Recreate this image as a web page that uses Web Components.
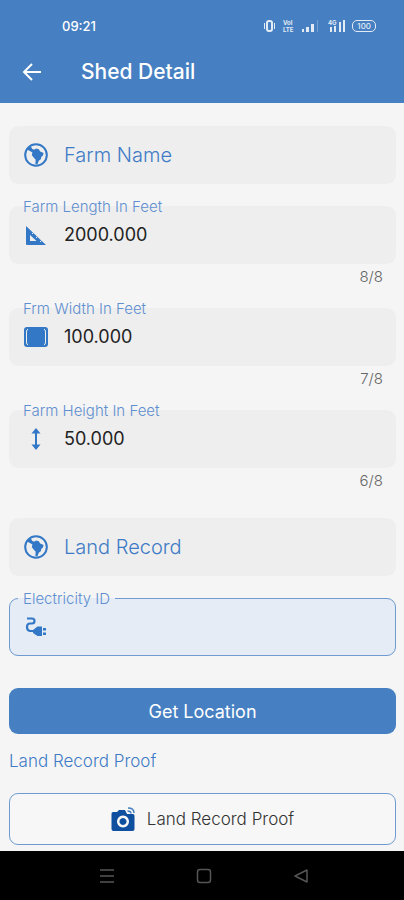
<!DOCTYPE html>
<html lang="en">
<head>
<meta charset="utf-8">
<meta name="viewport" content="width=device-width, initial-scale=1">
<title>Shed Detail</title>
<style>
    body {
        margin: 0;
        background: #f5f5f5;
        font-family: Inter, "Open Sans", sans-serif;
        color: #222;
    }
</style>
</head>
<body>
<shed-page></shed-page>

<script>
const ICONS = {
    globe: `<circle cx="12" cy="12" r="10.8" fill="none" stroke="currentColor" stroke-width="2"/>
        <path fill="currentColor" d="M3 6.5 6.4 3 8.6 6.2 10.6 6.6 12.2 5.6 14.8 6.2 16.2 8.4 19.6 10 18.8 12.8 17.4 13.8 16.8 16.2 14.8 17.8 13.4 21.4 11.4 21 11.6 16.4 9.8 14.8 7.8 12 8.4 9.4 6.8 8.4Z"/>`,
    ruler: `<path fill="currentColor" fill-rule="evenodd" d="M2 3 22 22H3Q2 22 2 21ZM6 12V18H12.5Z"/>
        <path stroke="#eee" d="M8 11 9.5 9.5M12 15l1.5-1.5M16 19l1.5-1.5"/>`,
    width: `<rect x="0" y="2" width="24" height="20" rx="3" fill="currentColor"/>
        <path stroke="#eee" fill="none" d="M4 4Q2.5 4.5 2.5 7V17Q2.5 19.5 4 20M20 4Q21.5 4.500 21.5 7V17Q21.5 19.5 20 20"/>`,
    height: `<path fill="none" stroke="currentColor" stroke-width="2" d="M12 4V20"/>
        <path fill="currentColor" d="M12 1 16.5 6.5H7.5ZM12 23 16.5 17.5H7.5Z"/>`,
    plug: `<path fill="none" stroke="currentColor" stroke-width="2.2" d="M3 3.5H8Q10.500 3.5 10.500 6T8 8.500H6Q3 8.500 3 12T6 16H10"/>
        <path fill="currentColor" d="M9 15 13.5 11.500H18V21H13.5L9 18ZM19 13H22V15.500H19ZM19 17.500H22V20H19Z"/>`,
    camera: `<path fill="#0f4f9f" fill-rule="evenodd" d="M2 5H6L8 3H14L16 7H22Q23.500 7 23.500 9V22Q23.500 24 21.500 24H2.500Q.5 24 .5 22V7Q.5 5 2 5ZM12 8.500a6 6 0 1 0 .01 0ZM12 11a3.500 3.500 0 1 1-.01 0Z"/>
        <path fill="none" stroke="#4680c2" stroke-width="1.500" d="M17 1Q23 1 23 6M16.500 4Q20 4 20 6.500"/>`
};

function render(el, html) {
    const template = document.createElement('template');
    template.innerHTML = html;
    el.attachShadow({ mode: 'open' });
    el.shadowRoot.appendChild(template.content.cloneNode(true));
}

// <app-icon name="globe">
class AppIcon extends HTMLElement {
    constructor() {
        super();
        render(this, `
            <style>
                :host { display: block; width: 24px; height: 24px; flex: none; }
                svg { display: block; width: 100%; height: 100%; }
            </style>
            <svg viewBox="0 0 24 24" aria-hidden="true">${ICONS[this.getAttribute('name')]}</svg>
        `);
    }
}

// clock, signal and battery row
class StatusBar extends HTMLElement {
    constructor() {
        super();
        render(this, `
            <style>
                :host {
                    display: flex;
                    align-items: center;
                    justify-content: space-between;
                    height: 52px;
                    padding: 0 28px 0 62px;
                    font-size: 13px;
                    font-weight: 500;
                }
                .icons { display: flex; align-items: center; gap: 6px; opacity: 0.85; }
                svg { display: block; }
                .battery {
                    border: 1px solid;
                    border-radius: 5px;
                    padding: 0 4px;
                    font-size: 8px;
                    line-height: 10px;
                }
            </style>
            <span>09:21</span>
            <div class="icons">
                <svg width="13" height="12" viewBox="0 0 13 12" fill="none" stroke="currentColor" stroke-width="2">
                    <rect x="4" y="1" width="5" height="10" rx="2"/>
                    <path stroke-width="1" d="M1.500 3V9M11.500 3V9"/>
                </svg>
                <svg width="14" height="14" viewBox="0 0 14 14" fill="currentColor" font-size="6" font-weight="700">
                    <text x="1" y="6">VoI</text>
                    <text x="1" y="13">LTE</text>
                </svg>
                <svg width="20" height="12" viewBox="0 0 20 12" fill="currentColor">
                    <path d="M0 9h2v3H0ZM4 7h3v5H4ZM9 4h3v8H9Z"/>
                    <path opacity=".3" d="M15 0h1v12h-1Z"/>
                </svg>
                <svg width="18" height="12" viewBox="0 0 18 12" fill="currentColor" font-size="6" font-weight="700">
                    <text x="0" y="5">4G</text>
                    <path d="M2 7h2v5H2ZM6 6h2v6H6ZM11 2h2v10h-2ZM15 0h2v12h-2Z"/>
                </svg>
                <span class="battery">100</span>
            </div>
        `);
    }
}

// blue header, title comes in the slot
class AppHeader extends HTMLElement {
    constructor() {
        super();
        render(this, `
            <style>
                :host { display: block; background: #4680c2; color: #fff; }
                .bar {
                    display: flex;
                    align-items: center;
                    gap: 37px;
                    height: 40px;
                    padding: 0 20px 11px;
                }
                button {
                    display: block;
                    padding: 0;
                    border: 0;
                    background: none;
                    color: inherit;
                }
                svg { display: block; }
                h1 { margin: 0; font-size: 21px; line-height: 28px; font-weight: 500; }
            </style>
            <status-bar></status-bar>
            <div class="bar">
                <button type="button" aria-label="Back">
                    <svg width="24" height="24" viewBox="0 0 24 24" fill="none" stroke="currentColor" stroke-width="2">
                        <path d="M21 12H4M12 4 4 12 12 20"/>
                    </svg>
                </button>
                <h1><slot></slot></h1>
            </div>
        `);
    }
}

// <shed-field label icon value max outlined>, the label floats once there is a value
class ShedField extends HTMLElement {
    constructor() {
        super();
        const label = this.getAttribute('label');
        const value = this.getAttribute('value') || '';
        const max = this.getAttribute('max');
        const floating = value !== '' || this.hasAttribute('outlined');

        render(this, `
            <style>
                :host { display: block; }
                fieldset {
                    min-width: 0;
                    margin: 0;
                    padding: 0 14px;
                    border: 1px solid transparent;
                    border-radius: 9px;
                    background: #eee;
                }
                fieldset.floating { margin-top: -8px; }
                :host([outlined]) fieldset { border-color: #6f9bd0; background: #e5ecf6; }
                legend {
                    margin-left: -6px;
                    padding: 0 5px;
                    font-size: 15px;
                    line-height: 17px;
                    font-weight: 300;
                    color: #5f8fd0;
                }
                .row { display: flex; align-items: center; gap: 16px; height: 56px; }
                .floating .row { height: 40px; padding-bottom: 8px; }
                app-icon { color: #3378c6; }
                input {
                    flex: 1;
                    min-width: 0;
                    padding: 0;
                    border: 0;
                    outline: 0;
                    background: none;
                    font: inherit;
                    font-size: 18px;
                    line-height: 24px;
                    color: #222;
                }
                input:placeholder-shown { font-size: 20px; }
                input::placeholder { font-weight: 300; color: #3f7bc6; opacity: 1; }
                .counter {
                    height: 22px;
                    padding-right: 13px;
                    text-align: right;
                    font-size: 15px;
                    line-height: 25px;
                    font-weight: 300;
                    color: #666;
                }
            </style>
            <fieldset class="${floating ? 'floating' : ''}">
                ${floating ? `<legend><label for="input">${label}</label></legend>` : ''}
                <div class="row">
                    <app-icon name="${this.getAttribute('icon')}"></app-icon>
                    <input id="input" type="text" value="${value}"
                        ${floating ? '' : `placeholder="${label}" aria-label="${label}"`}>
                </div>
            </fieldset>
            ${max ? `<div class="counter">${value.length}/${max}</div>` : ''}
        `);

        // keep the counter in step with what is typed
        if (max) {
            const input = this.shadowRoot.querySelector('input');
            input.maxLength = Number(max);
            input.addEventListener('input', () => {
                this.shadowRoot.querySelector('.counter').textContent = `${input.value.length}/${max}`;
            });
        }
    }
}

// filled or outlined button
class ShedButton extends HTMLElement {
    constructor() {
        super();
        render(this, `
            <style>
                :host { display: block; }
                button {
                    display: flex;
                    align-items: center;
                    justify-content: center;
                    gap: 12px;
                    box-sizing: border-box;
                    width: 100%;
                    height: 46px;
                    padding: 0;
                    border: 0;
                    border-radius: 9px;
                    background: #4680c2;
                    font: inherit;
                    font-size: 18px;
                    color: #fff;
                }
                :host([outlined]) button {
                    height: 52px;
                    border: 1px solid #6f9bd0;
                    background: #f7f7f7;
                    font-size: 17px;
                    font-weight: 300;
                    color: #333;
                }
            </style>
            <button type="button"><slot></slot></button>
        `);
    }
}

// android navigation keys
class NavBar extends HTMLElement {
    constructor() {
        super();
        render(this, `
            <style>
                :host {
                    display: flex;
                    align-items: center;
                    justify-content: center;
                    gap: 81px;
                    height: 49px;
                    padding-left: 4px;
                    background: #000;
                    color: #555;
                }
                button { padding: 0; border: 0; background: none; color: inherit; }
                svg { display: block; fill: none; stroke: currentColor; stroke-width: 1.5; }
            </style>
            <button type="button" aria-label="Recent apps">
                <svg width="16" height="16" viewBox="0 0 16 16"><path d="M1 2H15M1 8H15M1 14H15"/></svg>
            </button>
            <button type="button" aria-label="Home">
                <svg width="16" height="16" viewBox="0 0 16 16"><rect x="1.500" y="1.500" width="13" height="13" rx="2.500"/></svg>
            </button>
            <button type="button" aria-label="Back">
                <svg width="16" height="16" viewBox="0 0 16 16"><path stroke-linejoin="round" d="M14 2V14L2 8Z"/></svg>
            </button>
        `);
    }
}

class ShedPage extends HTMLElement {
    constructor() {
        super();
        render(this, `
            <style>
                :host { display: flex; flex-direction: column; min-height: 100vh; }
                main { flex: 1; padding: 23px 8px 6px 9px; }
                .fields { display: flex; flex-direction: column; gap: 22px; }
                .fields + .fields { margin-top: 28px; }
                shed-button { margin-top: 32px; }
                h2 {
                    margin: 15px 0 0;
                    font-size: 17px;
                    line-height: 24px;
                    font-weight: 300;
                    color: #3f7bc6;
                }
                h2 + shed-button { margin-top: 20px; }
            </style>
            <app-header>Shed Detail</app-header>
            <main>
                <div class="fields">
                    <shed-field label="Farm Name" icon="globe"></shed-field>
                    <shed-field label="Farm Length In Feet" icon="ruler" value="2000.000" max="8"></shed-field>
                    <shed-field label="Frm Width In Feet" icon="width" value="100.000" max="8"></shed-field>
                    <shed-field label="Farm Height In Feet" icon="height" value="50.000" max="8"></shed-field>
                </div>
                <div class="fields">
                    <shed-field label="Land Record" icon="globe"></shed-field>
                    <shed-field label="Electricity ID" icon="plug" outlined></shed-field>
                </div>
                <shed-button>Get Location</shed-button>
                <h2>Land Record Proof</h2>
                <shed-button outlined><app-icon name="camera"></app-icon>Land Record Proof</shed-button>
            </main>
            <nav-bar></nav-bar>
        `);
    }
}

customElements.define('app-icon', AppIcon);
customElements.define('status-bar', StatusBar);
customElements.define('app-header', AppHeader);
customElements.define('shed-field', ShedField);
customElements.define('shed-button', ShedButton);
customElements.define('nav-bar', NavBar);
customElements.define('shed-page', ShedPage);
</script>
</body>
</html>
